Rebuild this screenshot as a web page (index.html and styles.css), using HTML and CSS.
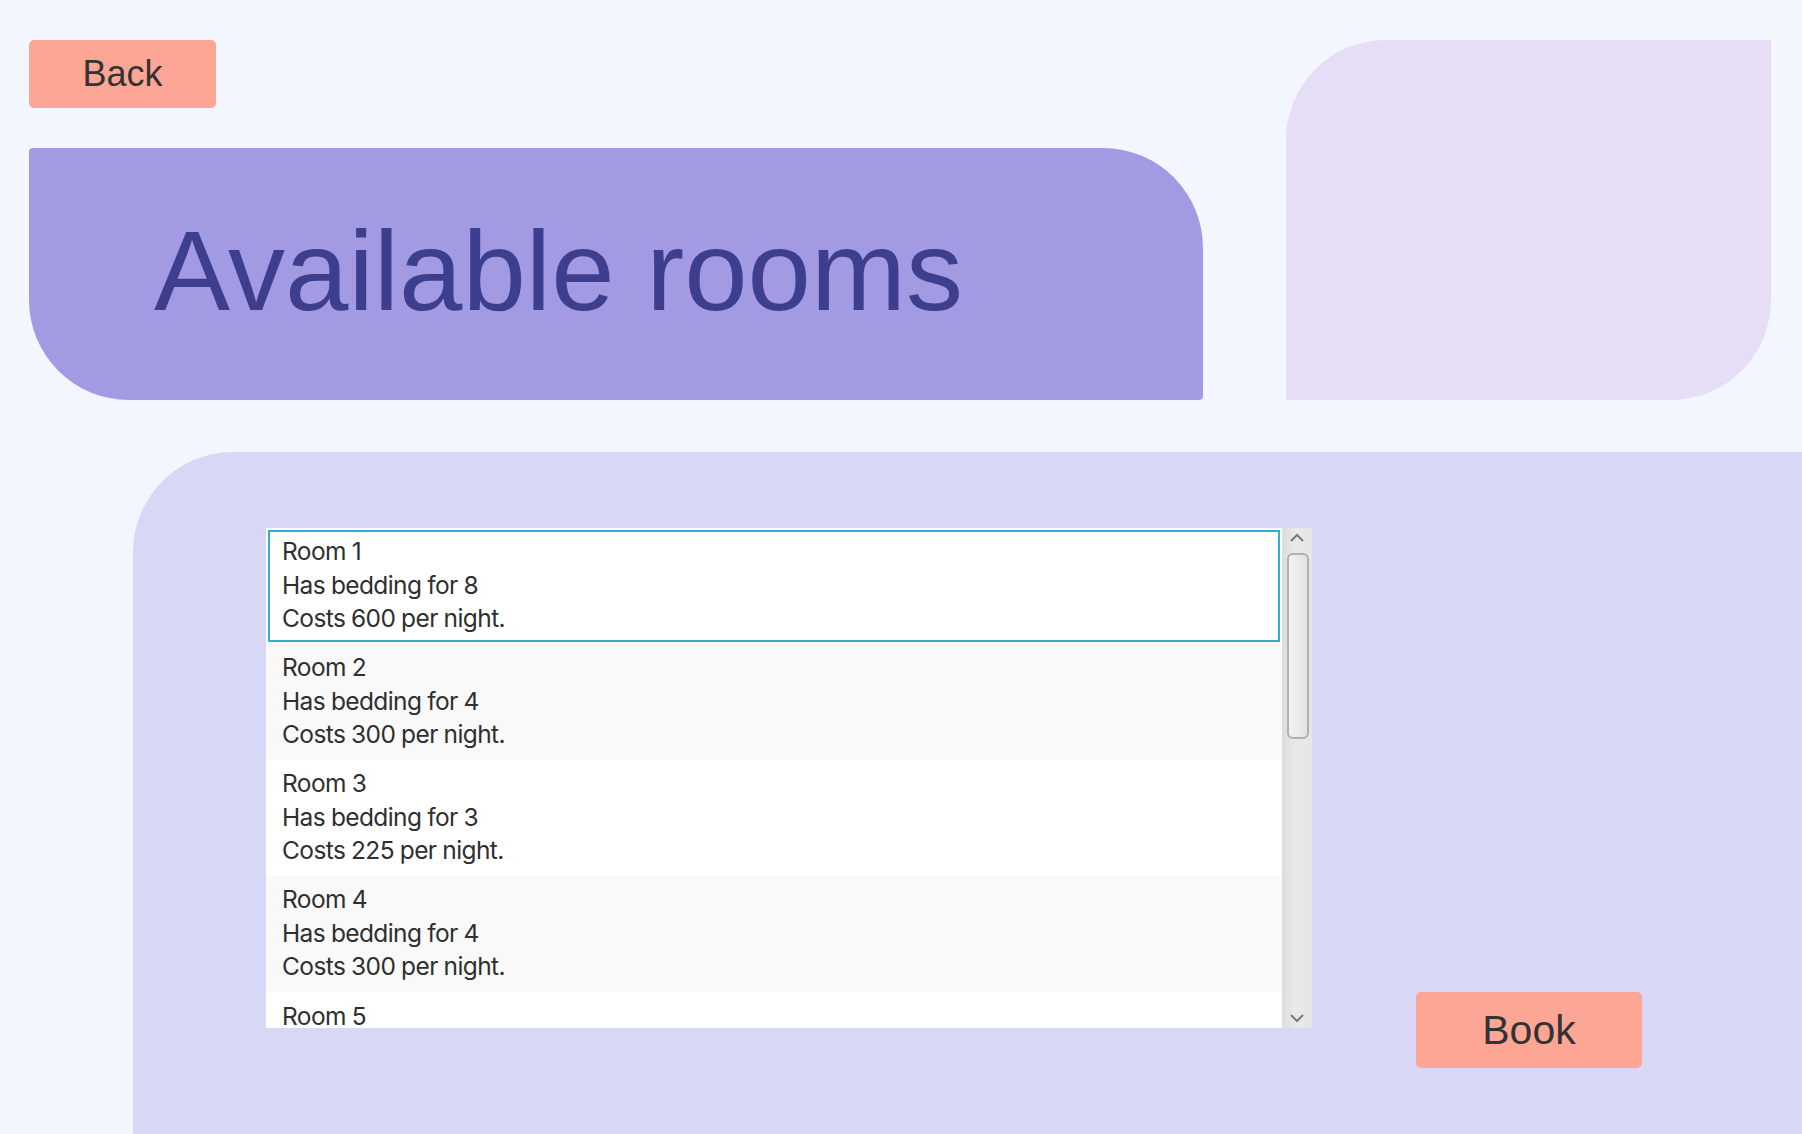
FILE: index.html
```html
<!DOCTYPE html>
<html lang="en">
<head>
<meta charset="utf-8">
<title>Available rooms</title>
<link rel="stylesheet" href="styles.css">
</head>
<body>
<div class="top">
  <div class="left-col">
    <button class="btn btn-back">Back</button>
    <div class="title-box"><h1 class="title">Available rooms</h1></div>
  </div>
  <div class="deco"></div>
</div>
<div class="panel">
  <div class="listview">
    <div class="cells">
      <div class="cell selected"><div>Room 1</div><div>Has bedding for 8</div><div>Costs 600 per night.</div></div>
      <div class="cell odd"><div>Room 2</div><div>Has bedding for 4</div><div>Costs 300 per night.</div></div>
      <div class="cell"><div>Room 3</div><div>Has bedding for 3</div><div>Costs 225 per night.</div></div>
      <div class="cell odd"><div>Room 4</div><div>Has bedding for 4</div><div>Costs 300 per night.</div></div>
      <div class="cell last"><div>Room 5</div></div>
    </div>
    <div class="scrollbar">
      <svg class="arrow" width="30" height="20" viewBox="0 0 30 20"><path d="M9 13 L15 7 L21 13" fill="none" stroke="#7a7a7a" stroke-width="2"/></svg>
      <div class="track"><div class="thumb"></div></div>
      <svg class="arrow" width="30" height="20" viewBox="0 0 30 20"><path d="M9 7 L15 13 L21 7" fill="none" stroke="#7a7a7a" stroke-width="2"/></svg>
    </div>
  </div>
  <button class="btn btn-book">Book</button>
</div>
</body>
</html>
```
FILE: styles.css
```css
html, body {
  margin: 0;
  padding: 0;
}
body {
  background: #f3f6fe;
  width: 1802px;
  height: 1134px;
  overflow: hidden;
  font-family: "Liberation Sans", Arial, sans-serif;
}
.top {
  display: flex;
  padding: 40px 0 0 29px;
}
.left-col {
  width: 1174px;
  display: flex;
  flex-direction: column;
}
.btn {
  border: none;
  background: #fea696;
  color: #333333;
  font-family: "Liberation Sans", Arial, sans-serif;
  border-radius: 5px;
  padding: 0;
  cursor: pointer;
}
.btn-back {
  width: 187px;
  height: 68px;
  font-size: 36px;
  margin-bottom: 40px;
}
.title-box {
  height: 252px;
  background: #a29be3;
  border-radius: 4px 100px 4px 100px;
  box-sizing: border-box;
  padding: 66px 0 0 125px;
}
.title {
  margin: 0;
  font-weight: normal;
  font-size: 114px;
  line-height: 1;
  color: #3d3e8e;
}
.deco {
  margin-left: 83px;
  width: 485px;
  height: 360px;
  background: #e6ddf7;
  border-radius: 100px 0 100px 0;
}
.panel {
  margin: 52px 0 0 133px;
  height: 682px;
  background: #d8d8f6;
  border-top-left-radius: 100px;
  display: flex;
  align-items: flex-start;
  padding: 76px 0 0 133px;
  box-sizing: border-box;
}
.listview {
  width: 1046px;
  height: 500px;
  display: flex;
  background: #ffffff;
  overflow: hidden;
}
.cells {
  flex: 1;
  overflow: hidden;
}
.cell {
  height: 116px;
  box-sizing: border-box;
  padding: 7px 0 0 16px;
  font-family: Inter, "Noto Sans", sans-serif;
  font-size: 24.5px;
  letter-spacing: -0.6px;
  word-spacing: -0.5px;
  line-height: 33.7px;
  color: #2f2f2f;
  background: #ffffff;
}
.cell.last {
  height: 36px;
  padding-top: 12px;
  line-height: 24px;
}
.cell.odd {
  background: #f9f9f9;
}
.cell.selected {
  outline: 2px solid #38abd5;
  outline-offset: -4px;
}
.scrollbar {
  width: 30px;
  display: flex;
  flex-direction: column;
  background: linear-gradient(to right, #dcdcdc, #e9e9e9 40%, #e6e6e6);
}
.arrow {
  display: block;
  flex: none;
}
.track {
  flex: 1;
  padding: 5px 3px 0 5px;
}
.thumb {
  height: 186px;
  box-sizing: border-box;
  border: 2px solid #b1b1b1;
  border-radius: 6px;
  background: linear-gradient(to right, #f3f3f3, #e3e3e3);
}
.btn-book {
  width: 226px;
  height: 76px;
  font-size: 41px;
  margin: 464px 0 0 104px;
}
```
